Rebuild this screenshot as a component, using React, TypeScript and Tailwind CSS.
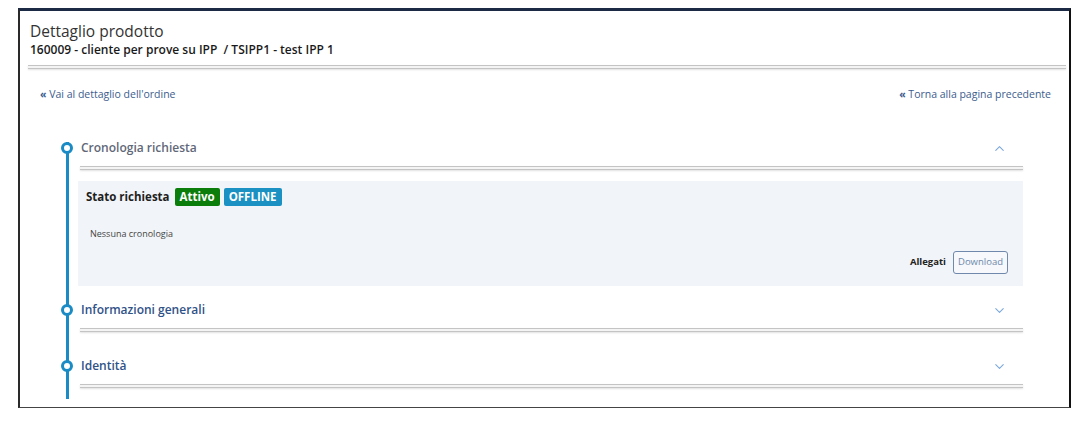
import { ChevronDown, ChevronUp } from 'lucide-react';

const font = { fontFamily: '"Open Sans", "Noto Sans", sans-serif' };

const DoubleLine = ({ className }: { className: string }) => (
  <div className={`h-[4px] border-t border-b border-[#c4c4c4] bg-[#f4f4f4] shadow-[0_1px_2px_rgba(0,0,0,0.12)] ${className}`} />
);

const Dot = () => (
  <div className="w-[12px] h-[12px] -ml-[8px] rounded-full border-[3px] border-[#1a8bc4] bg-white flex-shrink-0" />
);

const SectionHeader = ({ title, open, muted }: { title: string; open?: boolean; muted?: boolean }) => (
  <div className="flex items-center h-[12px] w-[954px]">
    <Dot />
    <span className={`ml-[8px] text-[12px] leading-[12px] font-semibold ${muted ? 'text-[#5f6878]' : 'text-[#2f5288]'}`}>
      {title}
    </span>
    <div className="flex-1" />
    {open ? (
      <ChevronUp className="w-[15px] h-[15px] text-[#7ba8dc] mr-[16px]" strokeWidth={1.7} />
    ) : (
      <ChevronDown className="w-[15px] h-[15px] text-[#7ba8dc] mr-[16px]" strokeWidth={1.7} />
    )}
  </div>
);

export default function App() {
  return (
    <div className="w-[1085px] h-[422px] bg-white pt-[8px] pl-[18px]" style={font}>
      <div className="w-[1053px] h-[400px] border-t-[3px] border-t-[#1c2a45] border-l-2 border-l-[#2a2a2a] border-r-2 border-r-[#111] border-b border-b-[#444] bg-white">
        {/* Header */}
        <div className="pl-[10px] pt-[9px]">
          <h1 className="text-[15.5px] leading-[22px] text-[#333]">Dettaglio prodotto</h1>
          <p className="text-[12px] leading-[16px] font-semibold text-[#1a1a1a] whitespace-pre">
            160009 - cliente per prove su IPP  / TSIPP1 - test IPP 1
          </p>
        </div>
        <DoubleLine className="ml-[8px] mr-[3px] mt-[7px]" />

        {/* Links */}
        <div className="flex justify-between pl-[20px] pr-[18px] mt-[18px] text-[10.5px] leading-[14px] text-[#3c5d8e]">
          <span><span className="font-bold">«</span> Vai al dettaglio dell'ordine</span>
          <span><span className="font-bold">«</span> Torna alla pagina precedente</span>
        </div>

        {/* Timeline */}
        <div className="ml-[46px] mt-[41px] border-l-[3px] border-[#1a8bc4] pb-[11px]">
          <SectionHeader title="Cronologia richiesta" open muted />
          <DoubleLine className="ml-[11px] w-[943px] mt-[12px]" />

          <div className="ml-[9px] w-[945px] mt-[11px] bg-[#f1f4f8] pt-[7px] pb-[12px] px-[8px]">
            <div className="flex items-center gap-[4px] h-[18px]">
              <span className="text-[11.5px] font-bold text-[#1e1e1e] mr-[1px]">Stato richiesta</span>
              <span className="h-[18px] px-[5px] rounded-[2px] bg-[#0b7d0b] text-white text-[11.5px] font-bold leading-[18px]">Attivo</span>
              <span className="h-[18px] px-[5px] rounded-[2px] bg-[#1b90c3] text-white text-[11.5px] font-bold leading-[18px]">OFFLINE</span>
            </div>
            <p className="mt-[21px] ml-[4px] text-[9px] leading-[14px] text-[#444]">Nessuna cronologia</p>
            <div className="flex items-center justify-end gap-[7px] mt-[10px] pr-[7px]">
              <span className="text-[9.5px] font-bold text-[#222] mr-[-3px]">Allegati</span>
              <button className="h-[23px] ml-[3px] px-[4px] rounded-[3px] border border-[#6f88ab] text-[9.5px] text-[#6f88ab] bg-white/40">
                Download
              </button>
            </div>
          </div>

          <div className="mt-[18px]">
            <SectionHeader title="Informazioni generali" />
          </div>
          <DoubleLine className="ml-[11px] w-[943px] mt-[12px]" />

          <div className="mt-[28px]">
            <SectionHeader title="Identità" />
          </div>
          <DoubleLine className="ml-[11px] w-[943px] mt-[12px]" />
        </div>
      </div>
    </div>
  );
}
